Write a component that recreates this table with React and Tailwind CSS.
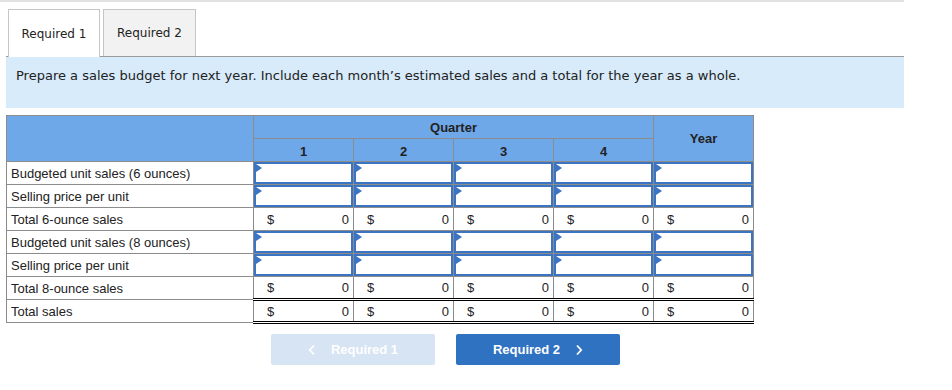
import React from 'react';

const rows = [
  { label: 'Budgeted unit sales (6 ounces)', kind: 'input' },
  { label: 'Selling price per unit', kind: 'input' },
  { label: 'Total 6-ounce sales', kind: 'total' },
  { label: 'Budgeted unit sales (8 ounces)', kind: 'input' },
  { label: 'Selling price per unit', kind: 'input' },
  { label: 'Total 8-ounce sales', kind: 'total' },
  { label: 'Total sales', kind: 'grand' },
];

const cols = [1, 2, 3, 4, 'year'];

function InputCell() {
  return (
    <td className="border border-[#8c8c8c] p-0 h-[23px]">
      <div className="relative h-[22px] border-2 border-[#3a74c2] bg-white">
        <span className="absolute top-0 left-0 w-0 h-0 border-y-[4px] border-y-transparent border-l-[6px] border-l-[#3a74c2]" />
      </div>
    </td>
  );
}

function TotalCell({ grand }) {
  const edge = grand
    ? 'border-t-[3px] border-b-[3px] border-double border-t-black border-b-black'
    : 'border-t border-t-black';
  return (
    <td className={`border border-[#8c8c8c] h-[23px] px-[4px] ${edge}`}>
      <div className="flex justify-between pl-[9px]">
        <span>$</span>
        <span>0</span>
      </div>
    </td>
  );
}

function Chevron({ dir }) {
  return (
    <svg width="8" height="12" viewBox="0 0 8 12" fill="none" stroke="currentColor" strokeWidth="1.8">
      {dir === 'left'
        ? <polyline points="6,1.5 1.8,6 6,10.5" />
        : <polyline points="2,1.5 6.2,6 2,10.5" />}
    </svg>
  );
}

export default function App() {
  return (
    <div className="w-[952px] h-[390px] bg-white text-[#222] font-['Liberation_Sans',Arial,sans-serif]">
      <div className="w-[904px] h-[2px] bg-[#e2e2e2]" />

      {/* tabs */}
      <div className="flex gap-[3px] pl-[8px] pt-[7px] font-['DejaVu_Sans',Verdana,sans-serif] text-[12px]">
        <div className="w-[92px] h-[48px] border border-b-0 border-[#c6c6c6] bg-white flex items-center justify-center relative z-10 -mb-px">
          Required 1
        </div>
        <div className="w-[93px] h-[47px] border border-b-0 border-[#c6c6c6] bg-[#f2f2f2] flex items-center justify-center">
          Required 2
        </div>
      </div>
      <div className="ml-[6px] w-[898px] border-t border-[#9a9a9a]" />
      <div className="ml-[6px] w-[898px] h-[51px] bg-[#d7ebfa] px-[10px] pt-[9px] font-['DejaVu_Sans',Verdana,sans-serif] text-[13px]">
        Prepare a sales budget for next year. Include each month’s estimated sales and a total for the year as a whole.
      </div>

      {/* budget table */}
      <table className="ml-[6px] mt-[7px] table-fixed border-collapse text-[13px] leading-[15px]">
        <colgroup>
          <col className="w-[247px]" />
          <col className="w-[100px]" />
          <col className="w-[100px]" />
          <col className="w-[100px]" />
          <col className="w-[100px]" />
          <col className="w-[100px]" />
        </colgroup>
        <thead className="bg-[#6fa8e9] font-bold">
          <tr>
            <th rowSpan={2} className="border border-[#8c8c8c]" />
            <th colSpan={4} className="border border-[#8c8c8c] h-[23px] pt-[1px] font-bold">Quarter</th>
            <th rowSpan={2} className="border border-[#8c8c8c] font-bold">Year</th>
          </tr>
          <tr>
            {[1, 2, 3, 4].map((q) => (
              <th key={q} className="border border-[#8c8c8c] h-[23px] pt-[3px] font-bold">{q}</th>
            ))}
          </tr>
        </thead>
        <tbody>
          {rows.map((r, i) => (
            <tr key={i}>
              <td className="border border-[#8c8c8c] h-[23px] px-[4px] whitespace-nowrap">{r.label}</td>
              {cols.map((c) =>
                r.kind === 'input'
                  ? <InputCell key={c} />
                  : <TotalCell key={c} grand={r.kind === 'grand'} />
              )}
            </tr>
          ))}
        </tbody>
      </table>

      {/* step buttons */}
      <div className="flex gap-[21px] pl-[271px] mt-[10px] text-[13px] font-bold text-white">
        <button className="w-[164px] h-[31px] rounded-[2px] bg-[#d6e4f3] flex items-center justify-center gap-[15px]">
          <Chevron dir="left" />
          <span>Required 1</span>
        </button>
        <button className="w-[164px] h-[31px] rounded-[2px] bg-[#2f72c2] flex items-center justify-center gap-[15px]">
          <span>Required 2</span>
          <Chevron dir="right" />
        </button>
      </div>
    </div>
  );
}
